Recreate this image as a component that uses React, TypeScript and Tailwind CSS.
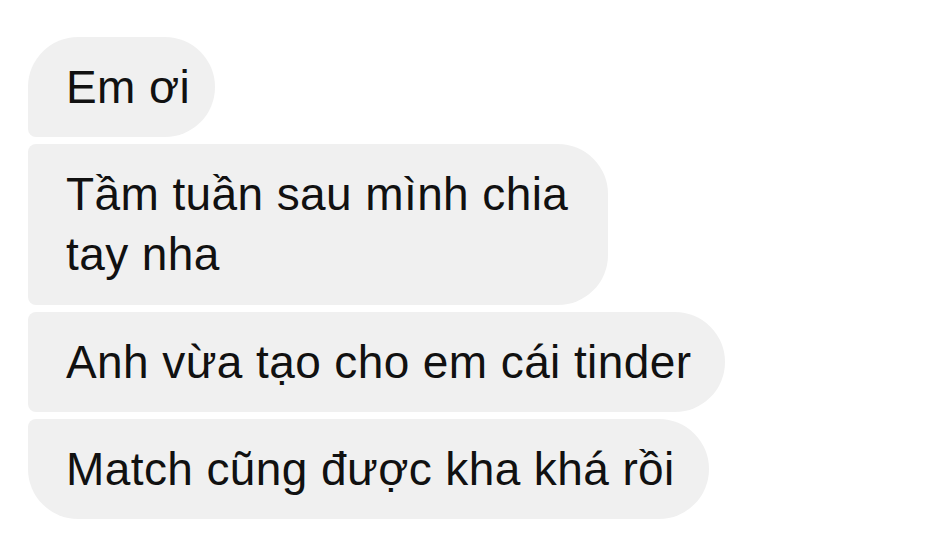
const messages = [
  { id: 1, text: "Em ơi", shape: "rounded-tl-[50px] rounded-bl-[8px] py-[20px] pr-[25px]" },
  { id: 2, text: "Tầm tuần sau mình chia\ntay nha", shape: "rounded-l-[8px] w-[580px] pt-[20px] pb-[21px] pr-[34px]" },
  { id: 3, text: "Anh vừa tạo cho em cái tinder", shape: "rounded-l-[8px] py-[20px] pr-[34px]" },
  { id: 4, text: "Match cũng được kha khá rồi", shape: "rounded-tl-[8px] rounded-bl-[50px] py-[20px] pr-[34px]" },
];

export default function App() {
  return (
    <div className="w-[932px] h-[540px] bg-white overflow-hidden">
      <div
        className="flex flex-col items-start gap-[7px] pt-[37px] pl-[28px]"
        style={{ fontFamily: '"Liberation Sans", Arial, sans-serif' }}
      >
        {messages.map((m) => (
          <div
            key={m.id}
            className={`bg-[#f0f0f0] rounded-r-[50px] pl-[38px] text-[46px] leading-[60px] tracking-[0.4px] text-[#111111] whitespace-pre-line ${m.shape}`}
          >
            {m.text}
          </div>
        ))}
      </div>
    </div>
  );
}
